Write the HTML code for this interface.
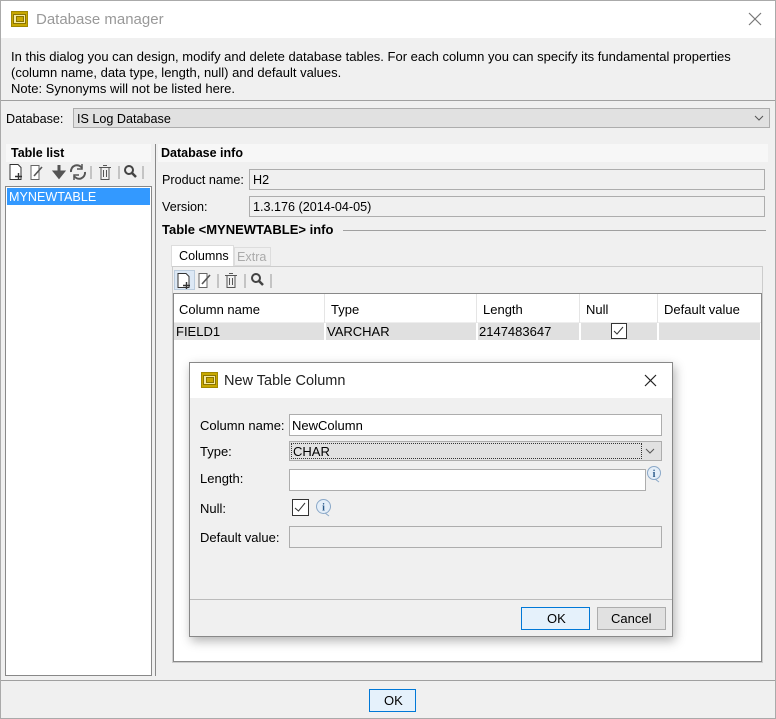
<!DOCTYPE html>
<html><head><meta charset="utf-8"><style>
*{margin:0;padding:0;box-sizing:border-box}
body{width:776px;height:719px;overflow:hidden;background:#f0f0f0;font-family:"Liberation Sans",sans-serif;font-size:12.6px;color:#000;position:relative}
.a{position:absolute}
.t{position:absolute;white-space:nowrap;line-height:14px}
.d{font-size:13px}
.b{font-weight:bold;font-size:12.5px}
.fld{position:absolute;border:1px solid #adadad;background:#f0f0f0}
.w{background:#fff}
svg{position:absolute}
</style></head><body>
<div class="a" style="left:0;top:0;width:776px;height:719px;border:1px solid #aaa"></div>
<div class="a" style="left:1px;top:1px;width:774px;height:37px;background:#fff"></div>
<svg style="left:11px;top:11px" width="17" height="16" viewBox="0 0 17 16"><rect x="0.5" y="0.5" width="16" height="15" fill="#c8a800" stroke="#a08800"/><rect x="2.5" y="3.5" width="12" height="9" fill="#f4e9a0" stroke="#8a7400"/><rect x="5.5" y="5.5" width="7" height="5" fill="#c8a800" stroke="#8a7400"/></svg>
<div class="t" style="left:36px;top:11px;font-size:15px;line-height:18px;color:#999">Database manager</div>
<svg style="left:748px;top:12px" width="14" height="14"><path d="M1 1L13 13M13 1L1 13" stroke="#777" stroke-width="1.2"/></svg>
<div class="t d" style="left:11px;top:50px">In this dialog you can design, modify and delete database tables. For each column you can specify its fundamental properties</div>
<div class="t d" style="left:11px;top:66px">(column name, data type, length, null) and default values.</div>
<div class="t d" style="left:11px;top:82px">Note: Synonyms will not be listed here.</div>
<div class="a" style="left:1px;top:100px;width:774px;height:1px;background:#a0a0a0"></div>
<div class="t" style="left:6px;top:112px">Database:</div>
<div class="fld" style="left:73px;top:108px;width:697px;height:20px;background:#e1e1e1"></div>
<div class="t" style="left:77px;top:112px">IS Log Database</div>
<svg style="left:754px;top:114px" width="10" height="8"><path d="M1 2L5 6L9 2" fill="none" stroke="#555"/></svg>
<div class="a" style="left:6px;top:144px;width:145px;height:18px;background:#f7f7f7"></div>
<div class="t b" style="left:11px;top:146px">Table list</div>
<svg style="left:8px;top:163px" width="140" height="18" viewBox="0 0 140 18">
<path d="M2 1.5H10L13 4.5V16.5H2Z" fill="#fff" stroke="#333"/><path d="M10.5 10V17M7 13.5H14" stroke="#333" stroke-width="1.4"/>
<path d="M23 2.5H31V16.5H23Z" fill="#fff" stroke="#666"/><path d="M26 13L34 4" stroke="#555" stroke-width="1.6"/>
<path d="M51 2V10M47 9L51 14L55 9Z" stroke="#555" stroke-width="3" fill="#555"/>
<path d="M63 9A6 6 0 0 1 74 5M77 9A6 6 0 0 1 66 13" fill="none" stroke="#555" stroke-width="2"/><path d="M74 1V6H69M66 17V12H71" fill="none" stroke="#555" stroke-width="1.5"/>
<path d="M83 3V16" stroke="#999"/>
<path d="M91 4.5H103M93 4.5V16.5H101V4.5M95 2.5H99" fill="none" stroke="#555"/><path d="M95.5 7V14M98.5 7V14" stroke="#555"/>
<path d="M111 3V16" stroke="#999"/>
<circle cx="121" cy="7" r="4" fill="none" stroke="#444" stroke-width="2"/><path d="M124 10L128 14" stroke="#444" stroke-width="2.5"/>
<path d="M135 3V16" stroke="#999"/>
</svg>
<div class="fld w" style="left:5px;top:186px;width:147px;height:490px;border-color:#888"></div>
<div class="a" style="left:7px;top:188px;width:143px;height:17px;background:#3399ff"></div>
<div class="t" style="left:9px;top:190px;color:#fff">MYNEWTABLE</div>
<div class="a" style="left:155px;top:144px;width:1px;height:532px;background:#888"></div>
<div class="a" style="left:158px;top:144px;width:610px;height:18px;background:#f7f7f7"></div>
<div class="t b" style="left:161px;top:146px">Database info</div>
<div class="t" style="left:162px;top:173px">Product name:</div>
<div class="fld" style="left:249px;top:169px;width:516px;height:21px"></div>
<div class="t" style="left:253px;top:173px">H2</div>
<div class="t" style="left:162px;top:200px">Version:</div>
<div class="fld" style="left:249px;top:196px;width:516px;height:21px"></div>
<div class="t" style="left:253px;top:200px">1.3.176 (2014-04-05)</div>
<div class="t b" style="left:162px;top:223px;font-size:13px">Table &lt;MYNEWTABLE&gt; info</div>
<div class="a" style="left:343px;top:230px;width:423px;height:1px;background:#a0a0a0"></div>
<div class="a" style="left:171px;top:245px;width:63px;height:22px;background:#fff;border:1px solid #ddd;border-bottom:none"></div>
<div class="t" style="left:179px;top:249px">Columns</div>
<div class="a" style="left:234px;top:247px;width:37px;height:19px;background:#f0f0f0;border:1px solid #ddd"></div>
<div class="t" style="left:237px;top:250px;color:#aaa">Extra</div>
<div class="a" style="left:172px;top:266px;width:591px;height:397px;border:1px solid #ccc;background:#f0f0f0"></div>
<svg style="left:174px;top:270px" width="110" height="20" viewBox="0 0 110 20">
<rect x="0.5" y="0.5" width="20" height="19" fill="#dce8f5" stroke="#bcd"/>
<path d="M4 3.5H12L15 6.5V17.5H4Z" fill="#fff" stroke="#333"/><path d="M12.5 12V19M9 15.5H16" stroke="#333" stroke-width="1.4"/>
<path d="M25 3.5H33V17.5H25Z" fill="#fff" stroke="#666"/><path d="M28 14L36 5" stroke="#555" stroke-width="1.6"/>
<path d="M44 4V18" stroke="#999"/>
<path d="M51 5.5H63M53 5.5V17.5H61V5.5M55 3.5H59" fill="none" stroke="#555"/><path d="M55.5 8V15M58.5 8V15" stroke="#555"/>
<path d="M71 4V18" stroke="#999"/>
<circle cx="82" cy="8" r="4" fill="none" stroke="#444" stroke-width="2"/><path d="M85 11L89 15" stroke="#444" stroke-width="2.5"/>
<path d="M97 4V18" stroke="#999"/>
</svg>
<div class="a" style="left:173px;top:293px;width:589px;height:369px;background:#fff;border:1px solid #888"></div>
<div class="a" style="left:174px;top:294px;width:587px;height:29px;background:#fff;border-bottom:1px solid #eee"></div>
<div class="a" style="left:324px;top:294px;width:1px;height:46px;background:#e5e5e5"></div>
<div class="a" style="left:476px;top:294px;width:1px;height:46px;background:#e5e5e5"></div>
<div class="a" style="left:579px;top:294px;width:1px;height:46px;background:#e5e5e5"></div>
<div class="a" style="left:657px;top:294px;width:1px;height:46px;background:#e5e5e5"></div>
<div class="t d" style="left:179px;top:303px">Column name</div>
<div class="t d" style="left:331px;top:303px">Type</div>
<div class="t d" style="left:483px;top:303px">Length</div>
<div class="t d" style="left:586px;top:303px">Null</div>
<div class="t d" style="left:664px;top:303px">Default value</div>
<div class="a" style="left:174px;top:323px;width:586px;height:17px;background:#e0e0e0"></div>
<div class="a" style="left:324px;top:323px;width:2px;height:17px;background:#fff"></div>
<div class="a" style="left:476px;top:323px;width:2px;height:17px;background:#fff"></div>
<div class="a" style="left:579px;top:323px;width:2px;height:17px;background:#fff"></div>
<div class="a" style="left:657px;top:323px;width:2px;height:17px;background:#fff"></div>
<div class="t d" style="left:176px;top:325px">FIELD1</div>
<div class="t d" style="left:327px;top:325px">VARCHAR</div>
<div class="t d" style="left:479px;top:325px">2147483647</div>
<svg style="left:611px;top:323px" width="16" height="16"><rect x="0.5" y="0.5" width="15" height="15" fill="#fff" stroke="#333"/><path d="M3 8L6 11L12 4" fill="none" stroke="#333"/></svg>
<div class="a" style="left:1px;top:680px;width:774px;height:1px;background:#a0a0a0"></div>
<div class="a" style="left:369px;top:689px;width:47px;height:23px;background:#e5f1fb;border:1px solid #0078d7"></div>
<div class="t d" style="left:384px;top:694px">OK</div>
<div class="a" style="left:189px;top:362px;width:484px;height:275px;background:#f0f0f0;border:1px solid #888;box-shadow:2px 4px 10px rgba(0,0,0,0.3)"></div>
<div class="a" style="left:190px;top:363px;width:482px;height:35px;background:#fff"></div>
<svg style="left:201px;top:372px" width="17" height="16" viewBox="0 0 17 16"><rect x="0.5" y="0.5" width="16" height="15" fill="#c8a800" stroke="#a08800"/><rect x="2.5" y="3.5" width="12" height="9" fill="#f4e9a0" stroke="#8a7400"/><rect x="5.5" y="5.5" width="7" height="5" fill="#c8a800" stroke="#8a7400"/></svg>
<div class="t" style="left:224px;top:372px;font-size:14.5px;line-height:18px;color:#222">New Table Column</div>
<svg style="left:644px;top:374px" width="13" height="13"><path d="M1 1L12 12M12 1L1 12" stroke="#222" stroke-width="1.2"/></svg>
<div class="t d" style="left:200px;top:419px">Column name:</div>
<div class="fld w" style="left:289px;top:414px;width:373px;height:22px"></div>
<div class="t d" style="left:292px;top:419px">NewColumn</div>
<div class="t d" style="left:200px;top:445px">Type:</div>
<div class="fld" style="left:289px;top:441px;width:373px;height:20px;background:#e1e1e1"></div>
<div class="a" style="left:291px;top:443px;width:351px;height:16px;border:1px dotted #333"></div>
<div class="t d" style="left:293px;top:445px">CHAR</div>
<svg style="left:645px;top:447px" width="10" height="8"><path d="M1 2L5 6L9 2" fill="none" stroke="#555"/></svg>
<div class="t d" style="left:200px;top:472px">Length:</div>
<div class="fld w" style="left:289px;top:469px;width:357px;height:22px"></div>
<svg style="left:646px;top:466px" width="17" height="17"><circle cx="8" cy="7" r="6.5" fill="#e4eef8" stroke="#8aa8c8"/><path d="M9 13L13 16" stroke="#8aa8c8"/><text x="8" y="11" font-size="10" font-weight="bold" font-family="Liberation Serif" text-anchor="middle" fill="#2a5a8a">i</text></svg>
<div class="t d" style="left:200px;top:502px">Null:</div>
<svg style="left:292px;top:499px" width="17" height="17"><rect x="0.5" y="0.5" width="16" height="16" fill="#fff" stroke="#333"/><path d="M3 9L6.5 12L13 4" fill="none" stroke="#333"/></svg>
<svg style="left:315px;top:499px" width="18" height="18"><circle cx="8.5" cy="7.5" r="7" fill="#e4eef8" stroke="#8aa8c8"/><path d="M10 14L14 17" stroke="#8aa8c8"/><text x="8.5" y="11.5" font-size="10" font-weight="bold" font-family="Liberation Serif" text-anchor="middle" fill="#2a5a8a">i</text></svg>
<div class="t d" style="left:200px;top:531px">Default value:</div>
<div class="fld" style="left:289px;top:526px;width:373px;height:22px"></div>
<div class="a" style="left:190px;top:599px;width:482px;height:1px;background:#bbb"></div>
<div class="a" style="left:521px;top:607px;width:69px;height:23px;background:#e5f1fb;border:1px solid #0078d7"></div>
<div class="t d" style="left:547px;top:612px">OK</div>
<div class="a" style="left:597px;top:607px;width:69px;height:23px;background:#e1e1e1;border:1px solid #adadad"></div>
<div class="t d" style="left:611px;top:612px">Cancel</div>
</body></html>
